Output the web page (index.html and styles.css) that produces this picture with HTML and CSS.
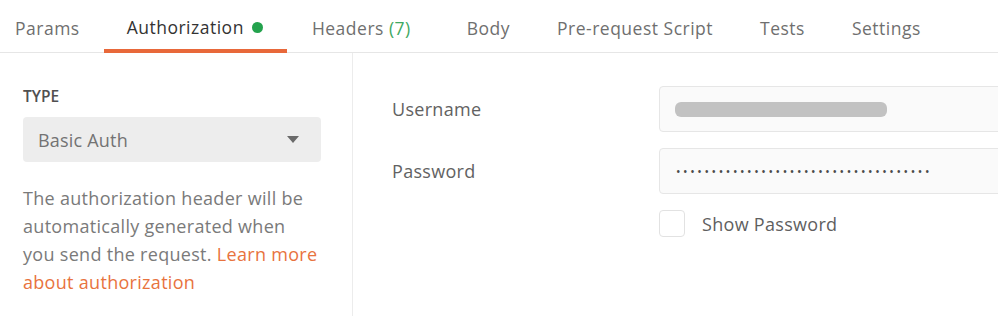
FILE: index.html
```html
<!DOCTYPE html>
<html>
  <head>
    <meta charset="utf-8">
    <title>Authorization</title>
    <link rel="stylesheet" href="styles.css">
  </head>
  <body>
    <div class="tabs">
      <div class="tab first">Params</div>
      <div class="tab active">Authorization <span class="dot"></span></div>
      <div class="tab headers">Headers <span class="count">(7)</span></div>
      <div class="tab">Body</div>
      <div class="tab">Pre-request Script</div>
      <div class="tab">Tests</div>
      <div class="tab">Settings</div>
    </div>

    <div class="panes">
      <div class="left">
        <div class="type-label">TYPE</div>
        <div class="select">
          <span>Basic Auth</span>
          <span class="caret"></span>
        </div>
        <p class="help">The authorization header will be automatically generated when you send the request. <a href="#">Learn more about authorization</a></p>
      </div>

      <div class="right">
        <div class="row">
          <div class="label">Username</div>
          <div class="field"><span class="blur"></span></div>
        </div>
        <div class="row">
          <div class="label">Password</div>
          <div class="field"><span class="dots">••••••••••••••••••••••••••••••••••••</span></div>
        </div>
        <div class="row">
          <div></div>
          <label class="check"><span class="box"></span>Show Password</label>
        </div>
      </div>
    </div>
  </body>
</html>
```

FILE: styles.css
```css
html {
  font-family: "Open Sans", "Noto Sans", sans-serif;
}
body {
  margin: 0;
  background-color: #ffffff;
  color: #6b6b6b;
  overflow: hidden;
}
.tabs {
  display: flex;
  height: 53px;
  border-bottom: 1px solid #e6e6e6;
  box-sizing: border-box;
}
.tab {
  display: flex;
  align-items: center;
  padding: 2px 24px 0 23px;
  font-size: 17.5px;
  letter-spacing: 0.5px;
  color: #6f6f6f;
  height: 53px;
  box-sizing: border-box;
  white-space: nowrap;
}
.tab.first {
  padding-left: 15px;
}
.tab.active {
  color: #333333;
  border-bottom: 4px solid #e8683a;
  padding-top: 5px;
}
.tab.headers {
  padding-left: 25px;
  padding-right: 33px;
}
.dot {
  display: inline-block;
  width: 11px;
  height: 11px;
  border-radius: 50%;
  background-color: #23a24d;
  margin-left: 8px;
}
.count {
  color: #3ea862;
  margin-left: 5px;
}
.panes {
  display: flex;
  height: 263px;
}
.left {
  width: 353px;
  box-sizing: border-box;
  border-right: 1px solid #ececec;
  padding: 33px 31px 0 23px;
}
.type-label {
  font-size: 15.5px;
  font-weight: 600;
  color: #505050;
  line-height: 20px;
}
.select {
  margin-top: 11px;
  height: 45px;
  background-color: #ededed;
  border-radius: 4px;
  display: flex;
  align-items: center;
  justify-content: space-between;
  padding: 0 22px 0 15px;
  font-size: 18px;
  letter-spacing: 0.2px;
  color: #737373;
}
.caret {
  width: 0;
  height: 0;
  border-left: 6px solid transparent;
  border-right: 6px solid transparent;
  border-top: 7px solid #6a6a6a;
}
.help {
  margin: 22px 0 0 0;
  width: 297px;
  font-size: 18px;
  letter-spacing: 0.3px;
  line-height: 28px;
  color: #7a7a7a;
}
.help a {
  color: #e8733e;
  text-decoration: none;
}
.right {
  flex: 1;
  padding: 33px 0 0 39px;
  margin-right: -20px;
}
.row {
  display: grid;
  grid-template-columns: 267px 1fr;
  align-items: center;
  margin-bottom: 16px;
}
.label {
  font-size: 18px;
  letter-spacing: 0.3px;
  color: #626262;
}
.field {
  height: 46px;
  box-sizing: border-box;
  background-color: #fafafa;
  border: 1px solid #e6e6e6;
  border-radius: 4px;
  display: flex;
  align-items: center;
  padding-left: 15px;
}
.blur {
  display: inline-block;
  width: 212px;
  height: 15px;
  border-radius: 6px;
  background-color: #c2c2c2;
}
.dots {
  font-size: 12px;
  letter-spacing: 2.6px;
  color: #4a4a4a;
  padding-left: 1px;
}
.check {
  display: flex;
  align-items: center;
  font-size: 18px;
  letter-spacing: 0.3px;
  color: #5f5f5f;
}
.box {
  width: 26px;
  height: 27px;
  box-sizing: border-box;
  border: 1px solid #e2e2e2;
  border-radius: 4px;
  background-color: #ffffff;
  margin-right: 17px;
}
```
